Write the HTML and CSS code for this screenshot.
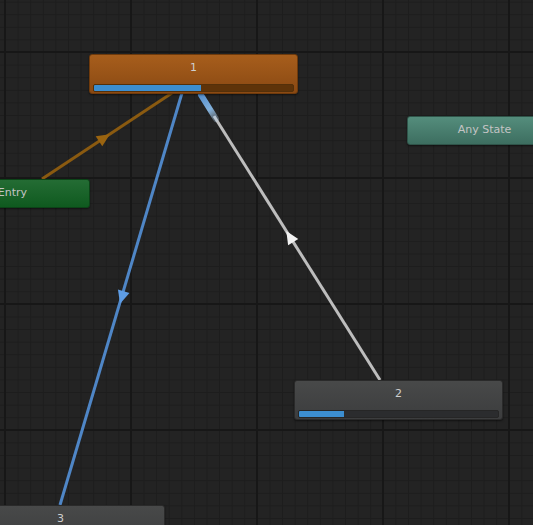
FILE: index.html
```html
<!DOCTYPE html>
<html>
<head>
<meta charset="utf-8">
<link rel="stylesheet" href="styles.css">
</head>
<body>
<div class="graph">
  <svg class="edges" width="533" height="525" viewBox="0 0 533 525">
    <line x1="42" y1="179" x2="172" y2="93" stroke="#8a5a10" stroke-width="3"/>
    <polygon points="7,0 -6,-6 -6,6" fill="#9a6410" transform="translate(104 138) rotate(-33.5)"/>
    <line x1="182" y1="93" x2="60" y2="505" stroke="#4f86c6" stroke-width="3"/>
    <polygon points="7,0 -6,-6 -6,6" fill="#5e9de6" transform="translate(122 297) rotate(106.5)"/>
    <defs>
      <linearGradient id="glow" x1="201" y1="95" x2="216" y2="119" gradientUnits="userSpaceOnUse">
        <stop offset="0" stop-color="#5c9ce0" stop-opacity="0.9"/>
        <stop offset="0.6" stop-color="#8cc0f0" stop-opacity="0.9"/>
        <stop offset="1" stop-color="#b8d8f5" stop-opacity="0.3"/>
      </linearGradient>
    </defs>
    <line x1="214" y1="116" x2="380" y2="380" stroke="#bdbdbd" stroke-width="3"/>
    <line x1="201" y1="95" x2="216" y2="119" stroke="url(#glow)" stroke-width="6" stroke-linecap="round"/>
    <polygon points="7,0 -6,-6 -6,6" fill="#f2f2f2" transform="translate(290 237) rotate(-122.1)"/>
  </svg>

  <div class="node state active n1">
    <div class="label">1</div>
    <div class="bar"><div class="fill" style="width:54%"></div></div>
  </div>

  <div class="node entry"><div class="label">Entry</div></div>
  <div class="node any"><div class="label">Any State</div></div>

  <div class="node state n2">
    <div class="label">2</div>
    <div class="bar"><div class="fill" style="width:22.5%"></div></div>
  </div>

  <div class="node state n3">
    <div class="label">3</div>
  </div>
</div>
</body>
</html>
```
FILE: styles.css
```css
html, body {
  margin: 0;
  padding: 0;
  width: 533px;
  height: 525px;
  overflow: hidden;
  background: #222222;
}
.graph {
  position: relative;
  width: 533px;
  height: 525px;
  overflow: hidden;
  background-color: #232323;
  background-image:
    linear-gradient(to right, #171717 2px, transparent 2px),
    linear-gradient(to bottom, #171717 2px, transparent 2px),
    linear-gradient(to right, #1d1d1d 1px, transparent 1px),
    linear-gradient(to bottom, #1d1d1d 1px, transparent 1px);
  background-size: 126px 126px, 126px 126px, 12.6px 12.6px, 12.6px 12.6px;
  background-position: 4px 51px, 4px 51px, 5px 52px, 5px 52px;
  font-family: "DejaVu Sans", "Liberation Sans", sans-serif;
}
.edges {
  position: absolute;
  left: 0;
  top: 0;
}
.node {
  position: absolute;
  box-sizing: border-box;
  border-radius: 3px;
  display: flex;
  flex-direction: column;
  align-items: stretch;
  box-shadow: 0 1px 2px rgba(0,0,0,0.5);
}
.label {
  font-size: 11px;
  line-height: 13px;
  text-align: center;
  color: #cfcfcf;
}
.state {
  width: 209px;
  height: 40px;
  padding: 6px 3px 0 3px;
  gap: 10px;
  background: linear-gradient(#484949, #3c3d3e);
  border: 1px solid #2a2a2a;
}
.active {
  background: linear-gradient(#a75e1c, #8a4913);
  border: 1px solid #6e3a0c;
}
.bar {
  height: 8px;
  box-sizing: border-box;
  border-radius: 2px;
  background: #2b2c2e;
  border: 1px solid #262626;
  overflow: hidden;
}
.active .bar {
  background: #5e3309;
  border-color: #54300a;
}
.fill {
  height: 100%;
  background: #3c8ed0;
}
.n1 { left: 89px; top: 54px; }
.n2 { left: 294px; top: 380px; }
.n3 { left: -44px; top: 505px; height: 40px; }
.entry, .any {
  width: 155px;
  height: 29px;
  justify-content: center;
  padding-bottom: 2px;
}
.entry {
  left: -65px;
  top: 179px;
  background: linear-gradient(#246c34, #0f5a1f);
  border: 1px solid #0c4418;
}
.any {
  left: 407px;
  top: 116px;
  background: linear-gradient(#548d7c, #3d6e60);
  border: 1px solid #2f5449;
}
.entry .label, .any .label { color: #c4c4c4; }
```
